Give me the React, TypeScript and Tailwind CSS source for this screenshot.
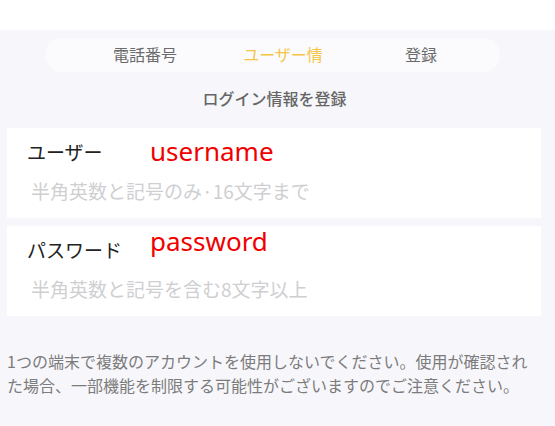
const jp = { fontFamily: '"Noto Sans CJK JP", "Noto Sans", sans-serif' };

const tabs = [
  { label: "電話番号", active: false },
  { label: "ユーザー情", active: true },
  { label: "登録", active: false },
];

const fields = [
  { label: "ユーザー", note: "username", hint: "半角英数と記号のみ·16文字まで", top: "top-[5px]" },
  { label: "パスワード", note: "password", hint: "半角英数と記号を含む8文字以上", top: "top-[-3px]" },
];

const App = () => {
  return (
    <div className="w-[555px] h-[426px] bg-[#f7f7fb] overflow-hidden" style={jp}>
      <div className="h-[30px] bg-white"></div>

      {/* Step tabs */}
      <div className="mt-[8px] ml-[45px] w-[455px] h-[34px] rounded-full bg-[#fbfbfd] flex items-center">
        <div className="ml-[31px] w-[414px] grid grid-cols-3 text-[16px] leading-[20px] -mt-[2px]">
          {tabs.map((t) => (
            <div
              key={t.label}
              className={t.active ? "text-center text-[#f3c544]" : "text-center text-[#6b6b6b]"}
            >
              {t.label}
            </div>
          ))}
        </div>
      </div>

      <div className="mt-[16px] text-center text-[16px] leading-[20px] text-[#666666] font-medium pr-[6px]">
        ログイン情報を登録
      </div>

      {/* Form */}
      <div className="mt-[20px] flex flex-col gap-[8px] pl-[7px] pr-[14px]">
        {fields.map((f) => (
          <div key={f.label} className="relative h-[90px] bg-white pl-[20px] pt-[11px]">
            <div className="text-[19px] leading-[26px] text-[#222222]">{f.label}</div>
            <div className="mt-[13px] ml-[4px] text-[19px] leading-[26px] text-[#cfcfd2]">{f.hint}</div>
            <span
              className={`absolute left-[143px] ${f.top} text-[26px] leading-[36px] text-[#f00000]`}
              style={{ fontFamily: '"Noto Sans", sans-serif' }}
            >
              {f.note}
            </span>
          </div>
        ))}
      </div>

      <p className="mt-[33px] ml-[7px] w-[525px] text-[16px] leading-[24px] text-[#7c7c7c]">
        1つの端末で複数のアカウントを使用しないでください。使用が確認された場合、一部機能を制限する可能性がございますのでご注意ください。
      </p>
    </div>
  );
};

export default App;
